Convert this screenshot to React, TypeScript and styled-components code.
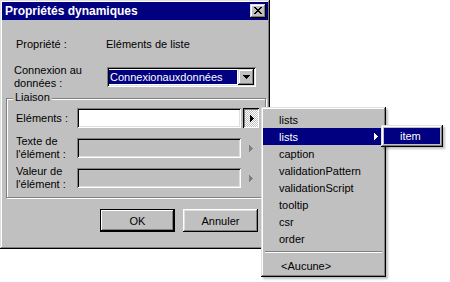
import styled, { createGlobalStyle } from "styled-components";

const GlobalStyle = createGlobalStyle`
    html, body {
        margin: 0;
        padding: 0;
        background: #ffffff;
    }
    body {
        font-family: "Liberation Sans", Arial, sans-serif;
        font-size: 11px;
        color: #000;
    }
`;

const raised = `
    box-shadow: inset -1px -1px #000, inset 1px 1px #dfdfdf,
        inset -2px -2px #808080, inset 2px 2px #fff;
`;

const sunken = `
    box-shadow: inset 1px 1px #808080, inset -1px -1px #fff,
        inset 2px 2px #000, inset -2px -2px #dfdfdf;
`;

const Page = styled.div`
    position: relative;
    width: 450px;
    height: 282px;
    overflow: hidden;
`;

const Window = styled.div`
    width: 270px;
    height: 249px;
    box-sizing: border-box;
    padding: 2px;
    background: #c0c0c0;
    display: flex;
    flex-direction: column;
    ${raised}
`;

const TitleBar = styled.div`
    height: 18px;
    display: flex;
    align-items: center;
    justify-content: space-between;
    padding: 0 2px 0 3px;
    background: #000080;
    color: #fff;
    font-weight: bold;
    font-size: 12px;
`;

const CloseButton = styled.div`
    width: 16px;
    height: 14px;
    box-sizing: border-box;
    display: flex;
    align-items: center;
    justify-content: center;
    padding: 0 0 1px 0;
    background: #c0c0c0;
    ${raised}
`;

const Body = styled.div`
    padding: 0 2px 0 4px;
    display: flex;
    flex-direction: column;
`;

const PropRow = styled.div`
    margin-top: 17px;
    height: 14px;
    display: flex;
    align-items: center;
    padding-left: 10px;
`;

const ConnRow = styled.div`
    margin-top: 13px;
    height: 26px;
    display: flex;
    align-items: center;
    padding-left: 8px;
`;

const Label = styled.div<{ $width: number }>`
    width: ${(p) => p.$width}px;
    flex-shrink: 0;
    line-height: 13px;
`;

const Select = styled.div`
    width: 149px;
    height: 20px;
    box-sizing: border-box;
    padding: 2px;
    display: flex;
    background: #fff;
    ${sunken}
`;

const SelectValue = styled.div`
    flex: 1;
    margin: 1px 1px 1px 0;
    padding-left: 1px;
    background: #000080;
    color: #fff;
    line-height: 14px;
    white-space: nowrap;
    overflow: hidden;
`;

const DropButton = styled.div`
    width: 16px;
    height: 16px;
    box-sizing: border-box;
    display: flex;
    align-items: center;
    justify-content: center;
    background: #c0c0c0;
    ${raised}
`;

const GroupBox = styled.div`
    position: relative;
    margin-top: 8px;
    border: 1px solid #808080;
    box-shadow: inset 1px 1px #fff, 1px 1px #fff;
    padding: 6px 0 6px 9px;
    display: flex;
    flex-direction: column;
    gap: 4px;
`;

const Legend = styled.span`
    position: absolute;
    top: -8px;
    left: 6px;
    padding: 0 2px;
    background: #c0c0c0;
    line-height: 13px;
`;

const FieldRow = styled.div`
    height: 26px;
    display: flex;
    align-items: center;
`;

const Field = styled.div<{ $disabled?: boolean }>`
    width: 164px;
    height: 20px;
    box-sizing: border-box;
    background: ${(p) => (p.$disabled ? "#c0c0c0" : "#fff")};
    ${sunken}
`;

const ArrowButton = styled.div<{ $pressed?: boolean }>`
    width: 16px;
    height: 20px;
    margin-left: 2px;
    box-sizing: border-box;
    display: flex;
    align-items: center;
    justify-content: center;
    padding-left: ${(p) => (p.$pressed ? 1 : 0)}px;
    background: ${(p) =>
        p.$pressed
            ? "repeating-conic-gradient(#fff 0 25%, #c0c0c0 0 50%) 0 0 / 2px 2px"
            : "transparent"};
    box-shadow: ${(p) =>
        p.$pressed
            ? "inset 1px 1px #000, inset -1px -1px #fff, inset 2px 2px #808080"
            : "none"};
`;

const ButtonRow = styled.div`
    margin-top: 11px;
    padding-right: 8px;
    display: flex;
    justify-content: flex-end;
    gap: 8px;
`;

const Button = styled.div<{ $default?: boolean }>`
    width: 75px;
    height: 23px;
    box-sizing: border-box;
    display: flex;
    align-items: center;
    justify-content: center;
    background: #c0c0c0;
    box-shadow: ${(p) =>
        p.$default
            ? "inset 0 0 0 1px #000, inset -2px -2px #000, inset 2px 2px #fff, inset -3px -3px #808080"
            : "inset -1px -1px #000, inset 1px 1px #fff, inset -2px -2px #808080, inset 2px 2px #dfdfdf"};
`;

const Menu = styled.div`
    position: absolute;
    left: 261px;
    top: 107px;
    width: 125px;
    box-sizing: border-box;
    padding: 4px 2px 3px 2px;
    background: #c0c0c0;
    box-shadow: inset -1px -1px #000, inset 1px 1px #dfdfdf,
        inset -2px -2px #808080, inset 2px 2px #fff,
        2px 2px 2px rgba(0, 0, 0, 0.25);
`;

const MenuItem = styled.div<{ $active?: boolean; $indent?: number }>`
    height: 17px;
    display: flex;
    align-items: center;
    justify-content: space-between;
    padding: 0 6px 0 ${(p) => p.$indent ?? 16}px;
    background: ${(p) => (p.$active ? "#000080" : "transparent")};
    color: ${(p) => (p.$active ? "#fff" : "#000")};
    white-space: nowrap;
`;

const Separator = styled.div`
    height: 10px;
    display: flex;
    flex-direction: column;
    justify-content: center;
    padding: 0 2px;

    &::before {
        content: "";
        display: block;
        border-top: 1px solid #808080;
        border-bottom: 1px solid #fff;
    }
`;

const SubMenu = styled.div`
    position: absolute;
    left: 381px;
    top: 125px;
    width: 62px;
    box-sizing: border-box;
    padding: 3px;
    background: #c0c0c0;
    box-shadow: inset -1px -1px #000, inset 1px 1px #dfdfdf,
        inset -2px -2px #808080, inset 2px 2px #fff,
        2px 2px 2px rgba(0, 0, 0, 0.25);
`;

const SubItem = styled.div`
    height: 16px;
    display: flex;
    align-items: center;
    padding-left: 16px;
    background: #000080;
    color: #fff;
`;

function CloseGlyph() {
    return (
        <svg width="8" height="7" viewBox="0 0 8 7" shapeRendering="crispEdges">
            <path
                fill="#000"
                d="M0 0h2v1H0zM6 0h2v1H6zM1 1h2v1H1zM5 1h2v1H5zM2 2h4v1H2zM3 3h2v1H3zM2 4h4v1H2zM1 5h2v1H1zM5 5h2v1H5zM0 6h2v1H0zM6 6h2v1H6z"
            />
        </svg>
    );
}

function DownTriangle() {
    return (
        <svg width="7" height="4" viewBox="0 0 7 4" shapeRendering="crispEdges">
            <path fill="#000" d="M0 0h7v1H0zM1 1h5v1H1zM2 2h3v1H2zM3 3h1v1H3z" />
        </svg>
    );
}

function RightTriangle({ color }: { color: string }) {
    return (
        <svg width="4" height="7" viewBox="0 0 4 7" shapeRendering="crispEdges">
            <path fill={color} d="M0 0h1v7H0zM1 1h1v5H1zM2 2h1v3H2zM3 3h1v1H3z" />
        </svg>
    );
}

const menuItems = [
    "lists",
    "lists",
    "caption",
    "validationPattern",
    "validationScript",
    "tooltip",
    "csr",
    "order",
];

export default function App() {
    return (
        <Page>
            <GlobalStyle />
            <Window>
                <TitleBar>
                    <span>Propriétés dynamiques</span>
                    <CloseButton>
                        <CloseGlyph />
                    </CloseButton>
                </TitleBar>
                <Body>
                    <PropRow>
                        <Label $width={90}>Propriété :</Label>
                        <span>Eléments de liste</span>
                    </PropRow>
                    <ConnRow>
                        <Label $width={93}>
                            Connexion au
                            <br />
                            données :
                        </Label>
                        <Select>
                            <SelectValue>Connexionauxdonnées</SelectValue>
                            <DropButton>
                                <DownTriangle />
                            </DropButton>
                        </Select>
                    </ConnRow>
                    <GroupBox>
                        <Legend>Liaison</Legend>
                        <FieldRow>
                            <Label $width={61}>Eléments :</Label>
                            <Field />
                            <ArrowButton $pressed>
                                <RightTriangle color="#000" />
                            </ArrowButton>
                        </FieldRow>
                        <FieldRow>
                            <Label $width={61}>
                                Texte de
                                <br />
                                l'élément :
                            </Label>
                            <Field $disabled />
                            <ArrowButton>
                                <RightTriangle color="#808080" />
                            </ArrowButton>
                        </FieldRow>
                        <FieldRow>
                            <Label $width={61}>
                                Valeur de
                                <br />
                                l'élément :
                            </Label>
                            <Field $disabled />
                            <ArrowButton>
                                <RightTriangle color="#808080" />
                            </ArrowButton>
                        </FieldRow>
                    </GroupBox>
                    <ButtonRow>
                        <Button $default>OK</Button>
                        <Button>Annuler</Button>
                    </ButtonRow>
                </Body>
            </Window>

            <Menu>
                {menuItems.map((item, i) => (
                    <MenuItem key={i} $active={i === 1}>
                        <span>{item}</span>
                        {i === 1 && <RightTriangle color="#fff" />}
                    </MenuItem>
                ))}
                <Separator />
                <MenuItem $indent={18}>&lt;Aucune&gt;</MenuItem>
            </Menu>

            <SubMenu>
                <SubItem>item</SubItem>
            </SubMenu>
        </Page>
    );
}
